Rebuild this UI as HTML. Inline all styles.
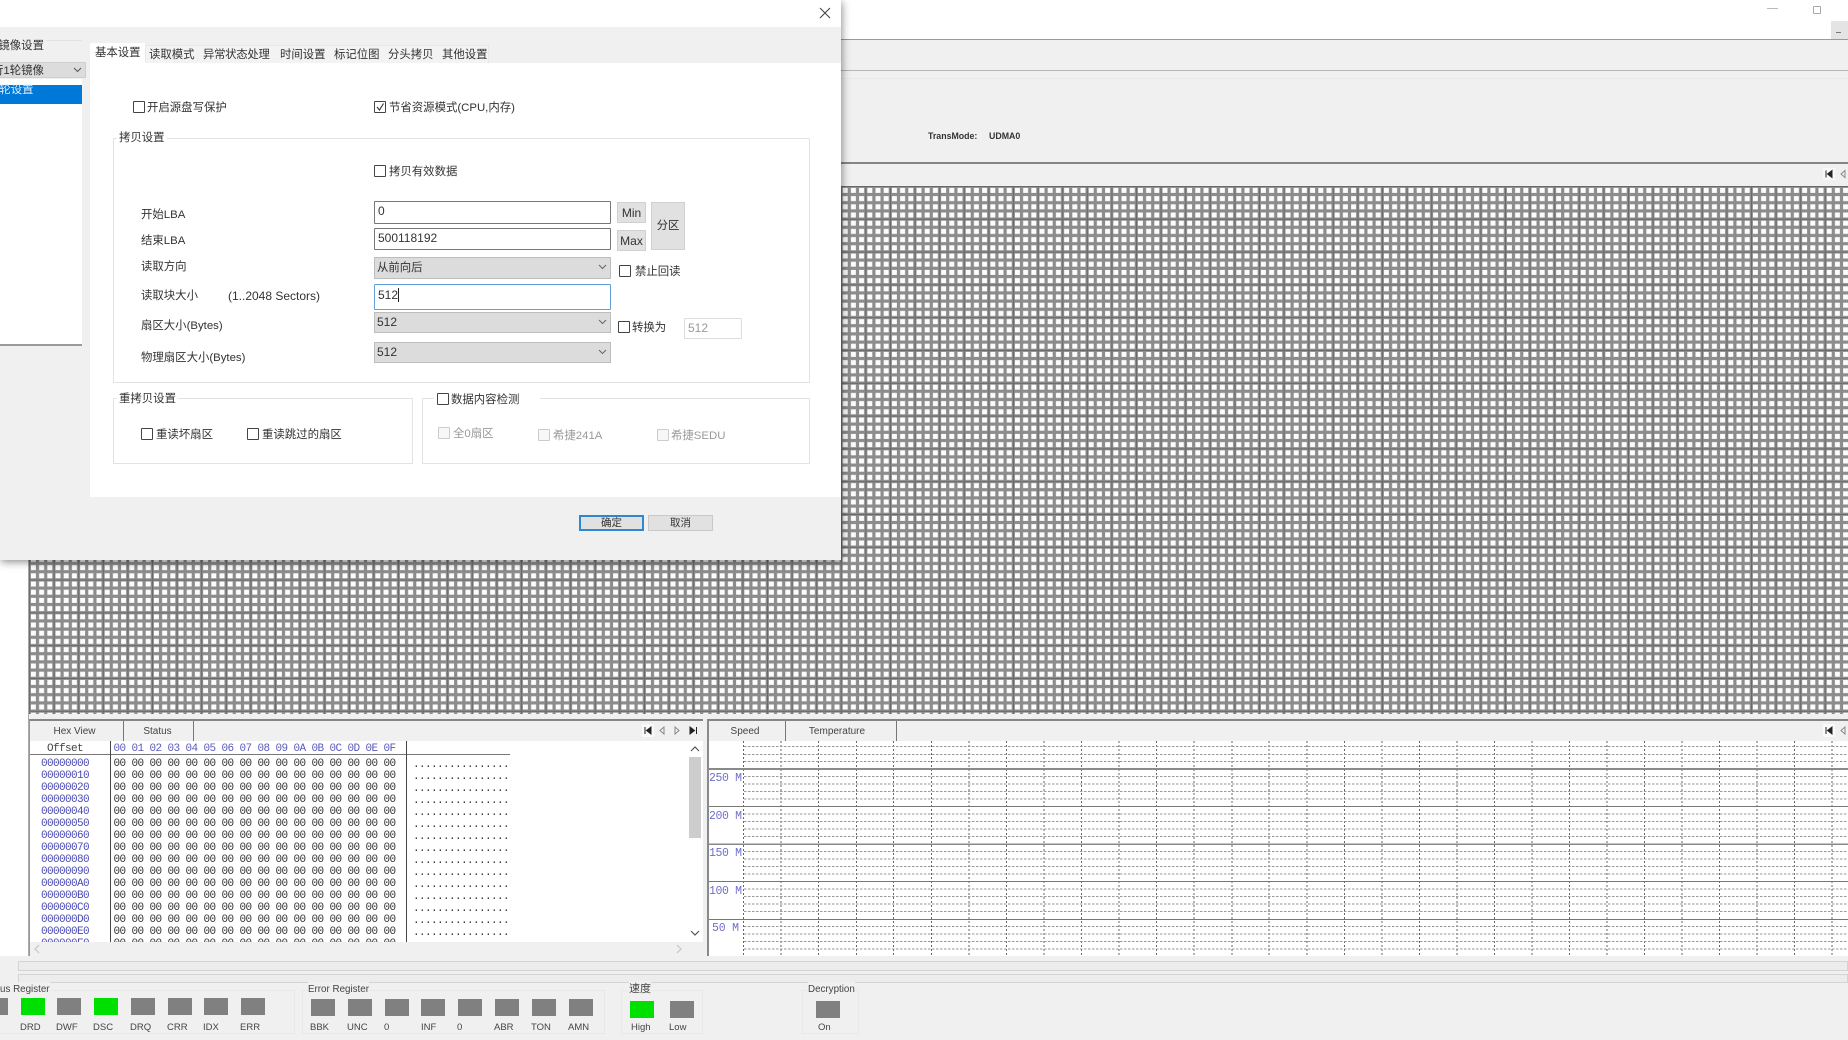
<!DOCTYPE html>
<html lang="zh"><head><meta charset="utf-8"><title>Settings</title>
<style>
html,body{margin:0;padding:0;width:1848px;height:1040px;overflow:hidden;background:#f0f0f0}
body{position:relative;font:11.4px "Liberation Sans","Noto Sans CJK SC",sans-serif;color:#333;filter:blur(.35px)}
div,pre,span.t{box-sizing:border-box}
.a{position:absolute}
.t{position:absolute;line-height:16px;height:16px;white-space:nowrap}
#d .t{margin-top:1px}
.cb{position:absolute;width:12px;height:12px;border:1px solid #444;background:#fff;border-radius:1px}
.cb.d{border-color:#ccc;background:#f7f7f7}
.inp{position:absolute;background:#fff;border:1px solid #777;border-radius:1px;padding-left:3px;font-size:12px;line-height:18px}
.cmb{position:absolute;background:#dcdcdc;border:1px solid #bdbdbd;padding-left:2px;font-size:12px;line-height:19px}
.cmb svg{position:absolute;right:3px;top:6px}
.btn{position:absolute;background:#e1e1e1;border:1px solid #d0d0d0;text-align:center;font-size:12px}
.gb{position:absolute;border:1px solid #e3e3e3}
.lab{position:absolute;background:#fff;padding:0 2px;line-height:14px;height:14px;white-space:nowrap}
.led{position:absolute;width:24px;height:17px;background:#808080}
.g{background:#00e000}
.s{font-size:10px;color:#444}
.l{font-size:9.5px;color:#444;margin-top:1px;margin-left:-1px}
pre{position:absolute;margin:0;font:11px/12.03px "Liberation Mono",monospace;letter-spacing:-.6px}
.tsep{position:absolute;width:1px;background:#777}
</style></head><body>

<!-- main window chrome -->
<div class="a" style="left:841px;top:0;width:1007px;height:39px;background:#fff"></div>
<div class="a" style="left:841px;top:39px;width:1007px;height:1px;background:#999"></div>
<div class="a" style="left:1767px;top:8px;width:11px;height:1px;background:#bbb"></div>
<div class="a" style="left:1813px;top:6px;width:8px;height:8px;border:1px solid #aaa;border-radius:1px;background:#fff"></div>
<div class="a" style="left:1831px;top:21px;width:17px;height:18px;background:#e4e4e4"></div>
<div class="a" style="left:1836px;top:32px;width:5px;height:1px;background:#777"></div>
<div class="a" style="left:841px;top:70px;width:1007px;height:1px;background:#b5b5b5"></div>
<div class="a" style="left:841px;top:78px;width:1007px;height:1px;background:#e8e8e8"></div>
<div class="t" style="left:928px;top:128px;font-size:8.8px;font-weight:bold;color:#333">TransMode:</div>
<div class="t" style="left:989px;top:128px;font-size:8.8px;font-weight:bold;color:#333">UDMA0</div>
<div class="a" style="left:841px;top:162px;width:1007px;height:2px;background:#858585"></div>
<svg class="a" style="left:1823px;top:168px" width="25" height="13"><rect x="0" y="0" width="12" height="12" fill="#f8f8f8"/><path d="M3 2.500V9.500M9 2.500L4.500 6L9 9.500Z" stroke="#222" fill="#222"/><path d="M22 2.500L18 6L22 9.500Z" stroke="#888" fill="none"/></svg>

<!-- cluster grid -->
<svg class="a" style="left:29px;top:186px" width="1819" height="528">
<defs><pattern id="gp" width="24.6" height="32.8" patternUnits="userSpaceOnUse" x="0" y="0">
<rect width="24.6" height="32.8" fill="#8c8c8c"/>
<g fill="#fcfcfc">
<rect x="1.900" y="1.900" width="5" height="5"/><rect x="10.100" y="1.900" width="5" height="5"/><rect x="18.300" y="1.900" width="5" height="5"/>
<rect x="1.900" y="10.100" width="5" height="5"/><rect x="10.100" y="10.100" width="5" height="5"/><rect x="18.300" y="10.100" width="5" height="5"/>
<rect x="1.900" y="18.300" width="5" height="5"/><rect x="10.100" y="18.300" width="5" height="5"/><rect x="18.300" y="18.300" width="5" height="5"/>
<rect x="1.900" y="26.500" width="5" height="5"/><rect x="10.100" y="26.500" width="5" height="5"/><rect x="18.300" y="26.500" width="5" height="5"/>
</g>
<rect x="0" y="0" width="24.6" height="1" fill="#6a6a6a"/><rect x="0" y="0" width="1" height="32.8" fill="#6a6a6a"/>
</pattern></defs>
<rect width="1819" height="528" fill="url(#gp)"/></svg>

<!-- left white strip -->
<div class="a" style="left:0;top:560px;width:28px;height:396px;background:#fff"></div>
<div class="a" style="left:28px;top:560px;width:1px;height:396px;background:#aaa"></div>

<!-- hex view -->
<div class="a" style="left:29px;top:719px;width:674px;height:237px;background:#f0f0f0;border-top:2px solid #858585;border-left:1px solid #999"></div>
<div class="tsep" style="left:123px;top:721px;height:20px"></div>
<div class="tsep" style="left:193px;top:721px;height:20px"></div>
<div class="t" style="left:28px;width:93px;text-align:center;top:724px;font-size:10px;color:#444">Hex View</div>
<div class="t" style="left:123px;width:69px;text-align:center;top:724px;font-size:10px;color:#444">Status</div>
<svg class="a" style="left:642px;top:724px" width="60" height="14"><rect x="0" y="0" width="12" height="13" fill="#fafafa"/><path d="M3 3V10M9 3L4.500 6.500L9 10Z" stroke="#222" fill="#222"/><path d="M22 3L18 6.500L22 10Z" stroke="#888" fill="none"/><path d="M33 3L37 6.500L33 10Z" stroke="#888" fill="none"/><path d="M48 3L52.500 6.500L48 10ZM54.500 3V10" stroke="#222" fill="#222"/></svg>
<div class="a" style="left:30px;top:741px;width:657px;height:201px;background:#fff;overflow:hidden">
<div class="a" style="left:0;top:13px;width:480px;height:1px;background:#777"></div>
<div class="a" style="left:80px;top:0;width:1px;height:201px;background:#444"></div>
<div class="a" style="left:376px;top:0;width:1px;height:201px;background:#444"></div>
<pre style="left:17px;top:2px;color:#444">Offset</pre>
<pre style="left:83.500px;top:2px;color:#5a5ac0">00 01 02 03 04 05 06 07 08 09 0A 0B 0C 0D 0E 0F</pre>
<pre style="left:11px;top:16.500px;color:#4a4ab4">00000000
00000010
00000020
00000030
00000040
00000050
00000060
00000070
00000080
00000090
000000A0
000000B0
000000C0
000000D0
000000E0
000000F0</pre>
<pre style="left:83.500px;top:16.500px;color:#333">00 00 00 00 00 00 00 00 00 00 00 00 00 00 00 00
00 00 00 00 00 00 00 00 00 00 00 00 00 00 00 00
00 00 00 00 00 00 00 00 00 00 00 00 00 00 00 00
00 00 00 00 00 00 00 00 00 00 00 00 00 00 00 00
00 00 00 00 00 00 00 00 00 00 00 00 00 00 00 00
00 00 00 00 00 00 00 00 00 00 00 00 00 00 00 00
00 00 00 00 00 00 00 00 00 00 00 00 00 00 00 00
00 00 00 00 00 00 00 00 00 00 00 00 00 00 00 00
00 00 00 00 00 00 00 00 00 00 00 00 00 00 00 00
00 00 00 00 00 00 00 00 00 00 00 00 00 00 00 00
00 00 00 00 00 00 00 00 00 00 00 00 00 00 00 00
00 00 00 00 00 00 00 00 00 00 00 00 00 00 00 00
00 00 00 00 00 00 00 00 00 00 00 00 00 00 00 00
00 00 00 00 00 00 00 00 00 00 00 00 00 00 00 00
00 00 00 00 00 00 00 00 00 00 00 00 00 00 00 00
00 00 00 00 00 00 00 00 00 00 00 00 00 00 00 00</pre>
<pre style="left:383px;top:17.500px;color:#333">................
................
................
................
................
................
................
................
................
................
................
................
................
................
................
................</pre>
</div>
<div class="a" style="left:687px;top:741px;width:16px;height:201px;background:#fff"></div>
<div class="a" style="left:689px;top:757px;width:12px;height:81px;background:#cdcdcd"></div>
<svg class="a" style="left:690px;top:745px" width="10" height="8"><path d="M1 6L5 2L9 6" stroke="#555" stroke-width="1.200" fill="none"/></svg>
<svg class="a" style="left:690px;top:929px" width="10" height="8"><path d="M1 2L5 6L9 2" stroke="#555" stroke-width="1.200" fill="none"/></svg>
<svg class="a" style="left:33px;top:944px" width="8" height="10"><path d="M6 1L2 5L6 9" stroke="#c5c5c5" stroke-width="1.200" fill="none"/></svg>
<svg class="a" style="left:675px;top:944px" width="8" height="10"><path d="M2 1L6 5L2 9" stroke="#c5c5c5" stroke-width="1.200" fill="none"/></svg>

<!-- speed panel -->
<div class="a" style="left:707px;top:719px;width:1141px;height:237px;background:#fff;border-top:2px solid #858585;border-left:2px solid #8a8a8a"></div>
<div class="a" style="left:709px;top:721px;width:1139px;height:20px;background:#f0f0f0"></div>
<div class="tsep" style="left:785px;top:721px;height:20px"></div>
<div class="tsep" style="left:896px;top:721px;height:20px"></div>
<div class="t" style="left:707px;width:76px;text-align:center;top:724px;font-size:10px;color:#444">Speed</div>
<div class="t" style="left:782px;width:110px;text-align:center;top:724px;font-size:10px;color:#444">Temperature</div>
<svg class="a" style="left:1823px;top:724px" width="25" height="14"><rect x="0" y="0" width="12" height="13" fill="#fafafa"/><path d="M3 3V10M9 3L4.500 6.500L9 10Z" stroke="#222" fill="#222"/><path d="M22 3L18 6.500L22 10Z" stroke="#888" fill="none"/></svg>
<svg class="a" style="left:709px;top:741px" width="1139" height="215">
<g stroke="#666" stroke-dasharray="2 2" fill="none">
<path d="M34.500 0V215M72 0V215M109.500 0V215M147.500 0V215M184.500 0V215M222.500 0V215M260 0V215M297.500 0V215M335 0V215M372.500 0V215M410 0V215M447.500 0V215M485 0V215M523 0V215M560 0V215M598 0V215M635.500 0V215M673 0V215M710.500 0V215M748 0V215M785.500 0V215M823 0V215M860.500 0V215M898 0V215M935.500 0V215M973 0V215M1010.500 0V215M1048 0V215M1085.500 0V215M1123 0V215"/>
</g>
<g stroke="#999" stroke-dasharray="2.500 1.500" fill="none">
<path d="M35 5.500H1139M35 13.500H1139M35 20.500H1139M35 35.500H1139M35 43H1139M35 50.500H1139M35 58H1139M35 73H1139M35 80.500H1139M35 88H1139M35 95.500H1139M35 110.500H1139M35 118H1139M35 125.500H1139M35 133H1139M35 148H1139M35 155.500H1139M35 163H1139M35 170.500H1139M35 185.500H1139M35 193H1139M35 200.500H1139M35 208H1139"/>
</g>
<rect x="0" y="27" width="1139" height="2" fill="#8a8a8a"/>
<rect x="0" y="65" width="1139" height="1" fill="#777"/>
<rect x="0" y="102.500" width="1139" height="1.500" fill="#888"/>
<rect x="0" y="140" width="1139" height="1" fill="#777"/>
<rect x="0" y="178" width="1139" height="1" fill="#777"/>
<g font-family="Liberation Mono,monospace" font-size="11.500" fill="#7070c8">
<text x="0" y="40" textLength="33">250 M</text><text x="0" y="78" textLength="33">200 M</text><text x="0" y="115" textLength="33">150 M</text><text x="0" y="153" textLength="33">100 M</text><text x="3" y="190" textLength="27">50 M</text></g>
</svg>

<!-- bottom progress bars -->
<div class="a" style="left:18px;top:961px;width:1830px;height:10px;background:#ececec;border:1px solid #d4d4d4"></div>
<div class="a" style="left:18px;top:974px;width:1830px;height:9px;background:#ececec;border:1px solid #d4d4d4"></div>

<!-- registers -->
<div class="a" style="left:-5px;top:990px;width:300px;height:44px;border:1px solid #e8e8e8"></div>
<div class="t s" style="left:0;top:982px;background:#f0f0f0;font-size:9.8px">us Register</div>
<div class="led" style="left:-16px;top:998px"></div><div class="led g" style="left:21px;top:998px"></div><div class="led" style="left:57px;top:998px"></div><div class="led g" style="left:94px;top:998px"></div><div class="led" style="left:131px;top:998px"></div><div class="led" style="left:168px;top:998px"></div><div class="led" style="left:204px;top:998px"></div><div class="led" style="left:241px;top:998px"></div>
<div class="t l" style="left:21px;top:1019px">DRD</div><div class="t l" style="left:57px;top:1019px">DWF</div><div class="t l" style="left:94px;top:1019px">DSC</div><div class="t l" style="left:131px;top:1019px">DRQ</div><div class="t l" style="left:168px;top:1019px">CRR</div><div class="t l" style="left:204px;top:1019px">IDX</div><div class="t l" style="left:241px;top:1019px">ERR</div>

<div class="a" style="left:302px;top:990px;width:303px;height:44px;border:1px solid #e8e8e8"></div>
<div class="t s" style="left:308px;top:982px;background:#f0f0f0;font-size:9.8px">Error Register</div>
<div class="led" style="left:311px;top:999px"></div><div class="led" style="left:348px;top:999px"></div><div class="led" style="left:385px;top:999px"></div><div class="led" style="left:421px;top:999px"></div><div class="led" style="left:458px;top:999px"></div><div class="led" style="left:495px;top:999px"></div><div class="led" style="left:532px;top:999px"></div><div class="led" style="left:569px;top:999px"></div>
<div class="t l" style="left:311px;top:1019px">BBK</div><div class="t l" style="left:348px;top:1019px">UNC</div><div class="t l" style="left:385px;top:1019px">0</div><div class="t l" style="left:422px;top:1019px">INF</div><div class="t l" style="left:458px;top:1019px">0</div><div class="t l" style="left:495px;top:1019px">ABR</div><div class="t l" style="left:532px;top:1019px">TON</div><div class="t l" style="left:569px;top:1019px">AMN</div>

<div class="a" style="left:621px;top:990px;width:82px;height:44px;border:1px solid #e8e8e8"></div>
<div class="t s" style="left:629px;top:981px;background:#f0f0f0;font-size:11px">速度</div>
<div class="led g" style="left:630px;top:1001px"></div><div class="led" style="left:670px;top:1001px"></div>
<div class="t l" style="left:632px;top:1019px">High</div><div class="t l" style="left:670px;top:1019px">Low</div>

<div class="a" style="left:802px;top:990px;width:57px;height:44px;border:1px solid #e8e8e8"></div>
<div class="t s" style="left:808px;top:982px;background:#f0f0f0;font-size:9.8px">Decryption</div>
<div class="led" style="left:816px;top:1001px"></div>
<div class="t l" style="left:819px;top:1019px">On</div>

<!-- dialog -->
<div id="d" class="a" style="left:0;top:0;width:841px;height:560px;background:#f0f0f0;box-shadow:1px 2px 8px rgba(0,0,0,.45)">
 <div class="a" style="left:0;top:0;width:841px;height:27px;background:#fff"></div>
 <svg class="a" style="left:819px;top:7px" width="12" height="12"><path d="M1 1L11 11M11 1L1 11" stroke="#444" stroke-width="1.100"/></svg>

 <!-- left panel -->
 <div class="a" style="left:0;top:40px;width:82px;height:1px;background:#e2e2e2"></div>
 <div class="t" style="left:-13px;top:37px;background:#f0f0f0;padding-right:2px">轮镜像设置</div>
 <div class="a" style="left:0;top:62px;width:86px;height:16px;background:#dcdcdc;border:1px solid #cfcfcf;border-left:0"></div>
 <div class="t" style="left:-8px;top:62px">行1轮镜像</div>
 <svg class="a" style="left:73px;top:67px" width="9" height="6"><path d="M1 1L4.500 4.500L8 1" stroke="#555" fill="none"/></svg>
 <div class="a" style="left:0;top:79px;width:82px;height:267px;background:#fff;border-bottom:2px solid #9a9a9a"></div>
 <div class="a" style="left:0;top:85px;width:82px;height:19px;background:#0078d7"></div>
 <div class="t" style="left:-7px;top:81px;color:#dfefff">1轮设置</div>

 <!-- tabs -->
 <div class="a" style="left:90px;top:43px;width:55px;height:21px;background:#fff;z-index:2"></div>
 <div class="a" style="left:145px;top:45px;width:344px;height:18px;background:#f3f3f3;border:1px solid #e8e8e8;border-bottom:0"></div>
 <div class="t" style="left:95px;top:44px;z-index:3">基本设置</div>
 <div class="t" style="left:149px;top:46px">读取模式</div>
 <div class="t" style="left:203px;top:46px;letter-spacing:-.3px">异常状态处理</div>
 <div class="t" style="left:280px;top:46px">时间设置</div>
 <div class="t" style="left:334px;top:46px">标记位图</div>
 <div class="t" style="left:388px;top:46px">分头拷贝</div>
 <div class="t" style="left:442px;top:46px">其他设置</div>

 <!-- page -->
 <div class="a" style="left:90px;top:63px;width:751px;height:434px;background:#fff"></div>

 <div class="cb" style="left:133px;top:101px"></div><div class="t" style="left:147px;top:99px">开启源盘写保护</div>
 <div class="cb" style="left:374px;top:101px"><svg width="10" height="10" style="display:block"><path d="M2 5L4.500 8L8.500 1.500" stroke="#333" stroke-width="1.100" fill="none"/></svg></div><div class="t" style="left:389px;top:99px">节省资源模式(CPU,内存)</div>

 <div class="gb" style="left:113px;top:138px;width:697px;height:245px"></div>
 <div class="lab" style="left:117px;top:131px">拷贝设置</div>
 <div class="cb" style="left:374px;top:165px"></div><div class="t" style="left:389px;top:163px">拷贝有效数据</div>

 <div class="t" style="left:141px;top:206px">开始LBA</div>
 <div class="inp" style="left:374px;top:201px;width:237px;height:23px">0</div>
 <div class="btn" style="left:617px;top:202px;width:29px;height:21px;line-height:20px">Min</div>
 <div class="btn" style="left:651px;top:202px;width:34px;height:48px;line-height:46px;font-size:11.4px">分区</div>
 <div class="t" style="left:141px;top:232px">结束LBA</div>
 <div class="inp" style="left:374px;top:228px;width:237px;height:22px">500118192</div>
 <div class="btn" style="left:617px;top:230px;width:29px;height:21px;line-height:20px">Max</div>

 <div class="t" style="left:141px;top:258px">读取方向</div>
 <div class="cmb" style="left:374px;top:257px;width:237px;height:22px;font-size:11.4px;line-height:21px">从前向后<svg width="9" height="6"><path d="M1 1L4.500 4.500L8 1" stroke="#666" fill="none"/></svg></div>
 <div class="cb" style="left:619px;top:265px"></div><div class="t" style="left:635px;top:263px">禁止回读</div>

 <div class="t" style="left:141px;top:287px">读取块大小</div>
 <div class="t" style="left:228px;top:287px;font-size:12px">(1..2048 Sectors)</div>
 <div class="inp" style="left:374px;top:284px;width:237px;height:26px;border:1px solid #5f9fd8;line-height:20px">512<span style="border-left:1px solid #222;margin-left:0"></span></div>

 <div class="t" style="left:141px;top:317px">扇区大小(Bytes)</div>
 <div class="cmb" style="left:374px;top:312px;width:237px;height:21px">512<svg width="9" height="6"><path d="M1 1L4.500 4.500L8 1" stroke="#666" fill="none"/></svg></div>
 <div class="cb" style="left:618px;top:321px"></div><div class="t" style="left:632px;top:319px">转换为</div>
 <div class="inp" style="left:684px;top:318px;width:58px;height:21px;border-color:#ddd;color:#999">512</div>

 <div class="t" style="left:141px;top:349px">物理扇区大小(Bytes)</div>
 <div class="cmb" style="left:374px;top:342px;width:237px;height:21px">512<svg width="9" height="6"><path d="M1 1L4.500 4.500L8 1" stroke="#666" fill="none"/></svg></div>

 <div class="gb" style="left:113px;top:398px;width:300px;height:66px"></div>
 <div class="lab" style="left:117px;top:392px">重拷贝设置</div>
 <div class="cb" style="left:141px;top:428px"></div><div class="t" style="left:156px;top:426px">重读坏扇区</div>
 <div class="cb" style="left:247px;top:428px"></div><div class="t" style="left:262px;top:426px">重读跳过的扇区</div>

 <div class="gb" style="left:422px;top:398px;width:388px;height:66px"></div>
 <div class="lab" style="left:434px;top:391px;width:106px"></div>
 <div class="cb" style="left:437px;top:393px"></div><div class="t" style="left:451px;top:391px">数据内容检测</div>
 <div class="cb d" style="left:438px;top:427px"></div><div class="t" style="left:453px;top:425px;color:#999">全0扇区</div>
 <div class="cb d" style="left:538px;top:429px"></div><div class="t" style="left:553px;top:427px;color:#999">希捷241A</div>
 <div class="cb d" style="left:657px;top:429px"></div><div class="t" style="left:671px;top:427px;color:#999">希捷SEDU</div>

 <div class="btn" style="left:579px;top:515px;width:65px;height:16px;line-height:13px;border:2px solid #2f87d0;font-size:10.5px">确定</div>
 <div class="btn" style="left:648px;top:515px;width:65px;height:16px;line-height:14px;border-color:#c9c9c9;font-size:10.5px">取消</div>
</div>
</body></html>
